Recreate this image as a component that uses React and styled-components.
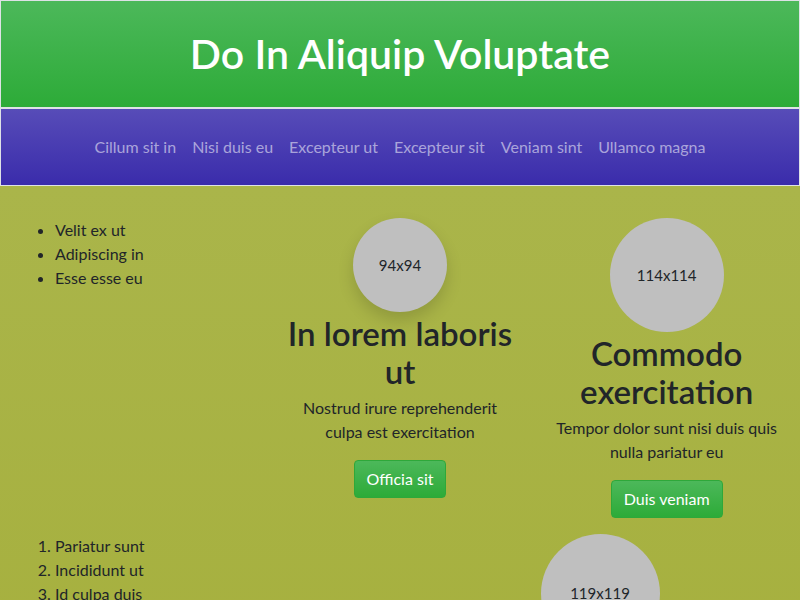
import React from 'react';
import styled, { createGlobalStyle } from 'styled-components';

const GlobalStyle = createGlobalStyle`
  body {
    margin: 0;
    font-family: Lato, "Noto Sans", sans-serif;
    font-size: 16px;
    line-height: 1.5;
    color: #212529;
    background: #a6b03e;
  }
`;

const navItems = ['Cillum sit in', 'Nisi duis eu', 'Excepteur ut', 'Excepteur sit', 'Veniam sint', 'Ullamco magna'];

const App = () => {
  return (
    <Page>
      <GlobalStyle />
      <Header>
        <Title>Do In Aliquip Voluptate</Title>
      </Header>
      <Nav>
        {navItems.map((item, i) => (
          <NavLink key={i} href="#">{item}</NavLink>
        ))}
      </Nav>
      <Main>
        <Row cols={3}>
          <Col>
            <List>
              <li>Velit ex ut</li>
              <li>Adipiscing in</li>
              <li>Esse esse eu</li>
            </List>
          </Col>
          <Card>
            <Avatar size={94} shadow>94x94</Avatar>
            <Heading>In lorem laboris ut</Heading>
            <Text>Nostrud irure reprehenderit culpa est exercitation</Text>
            <Button>Officia sit</Button>
          </Card>
          <Card>
            <Avatar size={114}>114x114</Avatar>
            <Heading>Commodo exercitation</Heading>
            <Text>Tempor dolor sunt nisi duis quis nulla pariatur eu</Text>
            <Button>Duis veniam</Button>
          </Card>
        </Row>
        <Row cols={2}>
          <Col>
            <OrderedList>
              <li>Pariatur sunt</li>
              <li>Incididunt ut</li>
              <li>Id culpa duis</li>
            </OrderedList>
          </Col>
          <Card>
            <Avatar size={119}>119x119</Avatar>
          </Card>
        </Row>
      </Main>
    </Page>
  );
};

const Page = styled.div`
  width: 100%;
  min-height: 100vh;
  display: flex;
  flex-direction: column;
`;

const Header = styled.header`
  height: 106px;
  border: 1px solid #dee2e6;
  background: linear-gradient(180deg, #4cb85a 0%, #2dab38 100%);
  display: flex;
  align-items: center;
  justify-content: center;
`;

const Title = styled.h1`
  margin: 0;
  font-size: 41px;
  font-weight: 600;
  line-height: 1.2;
  color: #fff;
`;

const Nav = styled.nav`
  height: 76px;
  border: 1px solid #dee2e6;
  background: linear-gradient(180deg, #574cb8 0%, #3a2cab 100%);
  display: flex;
  align-items: center;
  justify-content: center;
`;

const NavLink = styled.a`
  padding: 8px;
  color: rgba(255, 255, 255, 0.55);
  text-decoration: none;
  font-size: 16px;
`;

const Main = styled.main`
  flex: 1;
  padding: 32px 0;
  background: linear-gradient(180deg, #aab54a 0%, #a6b03e 100%);
  display: flex;
  flex-direction: column;
  gap: 16px;
`;

const Row = styled.div`
  display: grid;
  grid-template-columns: repeat(${(p) => p.cols}, 1fr);
`;

const Col = styled.div`
  padding: 0 15px;
`;

const List = styled.ul`
  margin: 0;
  padding-left: 40px;
`;

const OrderedList = styled.ol`
  margin: 0;
  padding-left: 40px;
`;

const Card = styled.div`
  padding: 0 18px;
  display: flex;
  flex-direction: column;
  align-items: center;
  text-align: center;
`;

const Avatar = styled.div`
  width: ${(p) => p.size}px;
  height: ${(p) => p.size}px;
  border-radius: 50%;
  background: #bfbfbf;
  display: flex;
  align-items: center;
  justify-content: center;
  font-size: 15px;
  color: #212529;
  box-shadow: ${(p) => (p.shadow ? '0 8px 16px rgba(0, 0, 0, 0.15)' : 'none')};
  margin-bottom: 2px;
`;

const Heading = styled.h2`
  margin: 0 0 6px;
  font-size: 33px;
  font-weight: 600;
  line-height: 38px;
`;

const Text = styled.p`
  margin: 0 0 16px;
`;

const Button = styled.button`
  padding: 6px 12px;
  font-family: inherit;
  font-size: 16px;
  line-height: 1.5;
  color: #fff;
  border: 1px solid #2ea83a;
  border-radius: 4px;
  background: linear-gradient(180deg, #4cb85a 0%, #2dab38 100%);
  cursor: pointer;
`;

export default App;
